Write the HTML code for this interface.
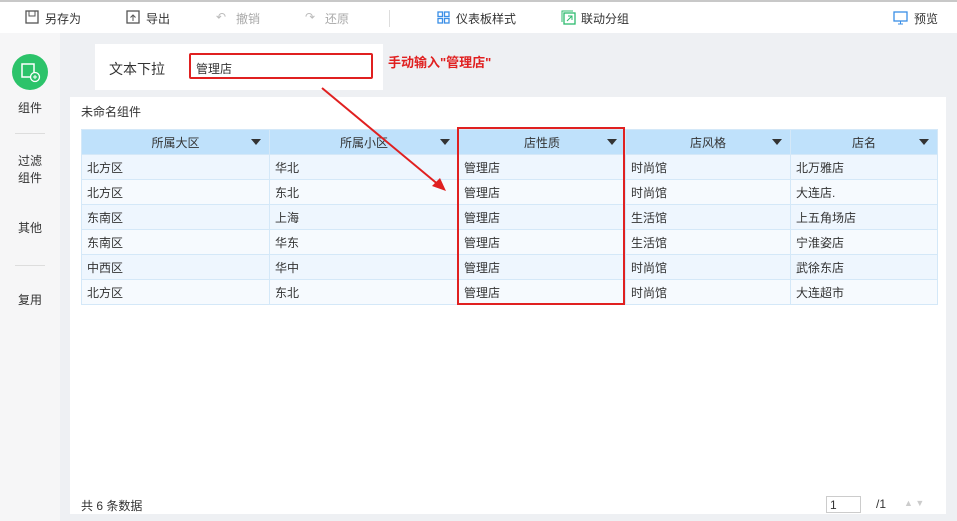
<!DOCTYPE html>
<html><head><meta charset="utf-8"><style>
*{margin:0;padding:0;box-sizing:border-box}
body{width:957px;height:521px;overflow:hidden;font-family:"Liberation Sans","Noto Sans CJK SC",sans-serif;font-size:12px;color:#333;background:#eef0f3;position:relative}
.abs{position:absolute}
.tb{left:0;top:0;width:957px;height:33px;background:#fff;border-top:2px solid #c8c8c8}
.tb span{position:absolute;top:8px;font-size:12px;color:#333}
.side{left:0;top:33px;width:60px;height:488px;background:#f6f6f7}
.side div{position:absolute;width:60px;text-align:center;font-size:12px;color:#333;line-height:17px}
table{border-collapse:collapse;table-layout:fixed}
td,th{border:1px solid #d4e8f8;height:25px;font-weight:normal;padding:0 5px;text-align:left;font-size:12px;color:#333}
th{background:#bfe1fb;text-align:center;position:relative}
th i{position:absolute;right:8px;top:9px;width:0;height:0;border-left:5px solid transparent;border-right:5px solid transparent;border-top:6px solid #333}
tr:nth-child(even) td{background:#eef6fe}
tr:nth-child(odd) td{background:#f6fafe}
</style></head><body>
<div class="abs tb">
<svg class="abs" style="left:25px;top:8px" width="14" height="14"><rect x="1" y="1" width="12" height="12" fill="none" stroke="#555" stroke-width="1.3"/><rect x="4" y="1" width="6" height="5" fill="none" stroke="#555"/></svg>
<span style="left:45px">另存为</span>
<svg class="abs" style="left:126px;top:8px" width="14" height="14"><rect x="1" y="1" width="12" height="12" fill="none" stroke="#555" stroke-width="1.3"/><path d="M7 11V5M4.5 7.5L7 5l2.5 2.5" fill="none" stroke="#555"/></svg>
<span style="left:146px">导出</span>
<span style="left:216px;color:#bbb">↶</span><span style="left:236px;color:#aaa">撤销</span>
<span style="left:305px;color:#bbb">↷</span><span style="left:325px;color:#aaa">还原</span>
<div class="abs" style="left:389px;top:8px;width:1px;height:17px;background:#ddd"></div>
<svg class="abs" style="left:437px;top:9px" width="13" height="13"><g fill="none" stroke="#3a8ee6" stroke-width="1.3"><rect x="1" y="1" width="4.5" height="4.5"/><rect x="7.5" y="1" width="4.5" height="4.5"/><rect x="1" y="7.5" width="4.5" height="4.5"/><rect x="7.5" y="7.5" width="4.5" height="4.5"/></g></svg>
<span style="left:456px">仪表板样式</span>
<svg class="abs" style="left:561px;top:8px" width="15" height="15"><rect x="3" y="3" width="11" height="11" fill="none" stroke="#2dbb6e" stroke-width="1.3"/><path d="M1 12V1h11" fill="none" stroke="#2dbb6e"/><path d="M6 11l5-5M7 6h4v4" fill="none" stroke="#2dbb6e"/></svg>
<span style="left:581px">联动分组</span>
<svg class="abs" style="left:893px;top:9px" width="15" height="14"><rect x="1" y="1" width="13" height="9" fill="none" stroke="#3a8ee6" stroke-width="1.3"/><path d="M5 13h5M7.5 10v3" stroke="#3a8ee6"/></svg>
<span style="left:914px">预览</span>
</div>
<div class="abs side">
<div style="top:21px;left:12px;width:36px;height:36px;border-radius:50%;background:#2cc36a"></div>
<svg class="abs" style="left:21px;top:30px" width="20" height="20"><rect x="1" y="1" width="12" height="13" fill="none" stroke="#fff" stroke-width="1.5"/><circle cx="14" cy="14" r="4.5" fill="#2cc36a" stroke="#fff" stroke-width="1.3"/><path d="M12 14h4M14 12v4" stroke="#fff"/></svg>
<div style="top:67px">组件</div>
<div style="top:100px;left:15px;width:30px;height:1px;background:#ddd"></div>
<div style="top:120px">过滤<br>组件</div>
<div style="top:187px">其他</div>
<div style="top:232px;left:15px;width:30px;height:1px;background:#ddd"></div>
<div style="top:259px">复用</div>
</div>
<div class="abs" style="left:95px;top:44px;width:288px;height:46px;background:#fff"></div>
<div class="abs" style="left:109px;top:59px;font-size:14px">文本下拉</div>
<div class="abs" style="left:189px;top:53px;width:184px;height:26px;border:2px solid #e02020;border-radius:2px;background:#fff;padding:5px 0 0 5px;font-size:12px">管理店</div>
<div class="abs" style="left:388px;top:52px;color:#e02020;font-weight:bold;font-size:13px">手动输入"管理店"</div>
<div class="abs" style="left:70px;top:97px;width:876px;height:417px;background:#fff"></div>
<div class="abs" style="left:81px;top:103px">未命名组件</div>
<table class="abs" style="left:81px;top:129px;width:856px">
<colgroup><col style="width:188px"><col style="width:189px"><col style="width:167px"><col style="width:165px"><col style="width:147px"></colgroup>
<tr><th>所属大区<i></i></th><th>所属小区<i></i></th><th>店性质<i></i></th><th>店风格<i></i></th><th>店名<i></i></th></tr>
<tr><td>北方区</td><td>华北</td><td>管理店</td><td>时尚馆</td><td>北万雅店</td></tr>
<tr><td>北方区</td><td>东北</td><td>管理店</td><td>时尚馆</td><td>大连店.</td></tr>
<tr><td>东南区</td><td>上海</td><td>管理店</td><td>生活馆</td><td>上五角场店</td></tr>
<tr><td>东南区</td><td>华东</td><td>管理店</td><td>生活馆</td><td>宁淮姿店</td></tr>
<tr><td>中西区</td><td>华中</td><td>管理店</td><td>时尚馆</td><td>武徐东店</td></tr>
<tr><td>北方区</td><td>东北</td><td>管理店</td><td>时尚馆</td><td>大连超市</td></tr>
</table>
<div class="abs" style="left:457px;top:127px;width:168px;height:178px;border:2px solid #e02020"></div>
<svg class="abs" style="left:0;top:0" width="957" height="521"><line x1="322" y1="88" x2="440" y2="186" stroke="#e02020" stroke-width="2"/><path d="M446 191L432 186L440 178Z" fill="#e02020"/></svg>
<div class="abs" style="left:81px;top:497px">共 6 条数据</div>
<div class="abs" style="left:826px;top:496px;width:35px;height:17px;border:1px solid #ccc;padding:1px 3px">1</div>
<div class="abs" style="left:876px;top:497px">/1</div>
<div class="abs" style="left:904px;top:498px;color:#ccc;font-size:9px">▲ ▼</div>
</body></html>
